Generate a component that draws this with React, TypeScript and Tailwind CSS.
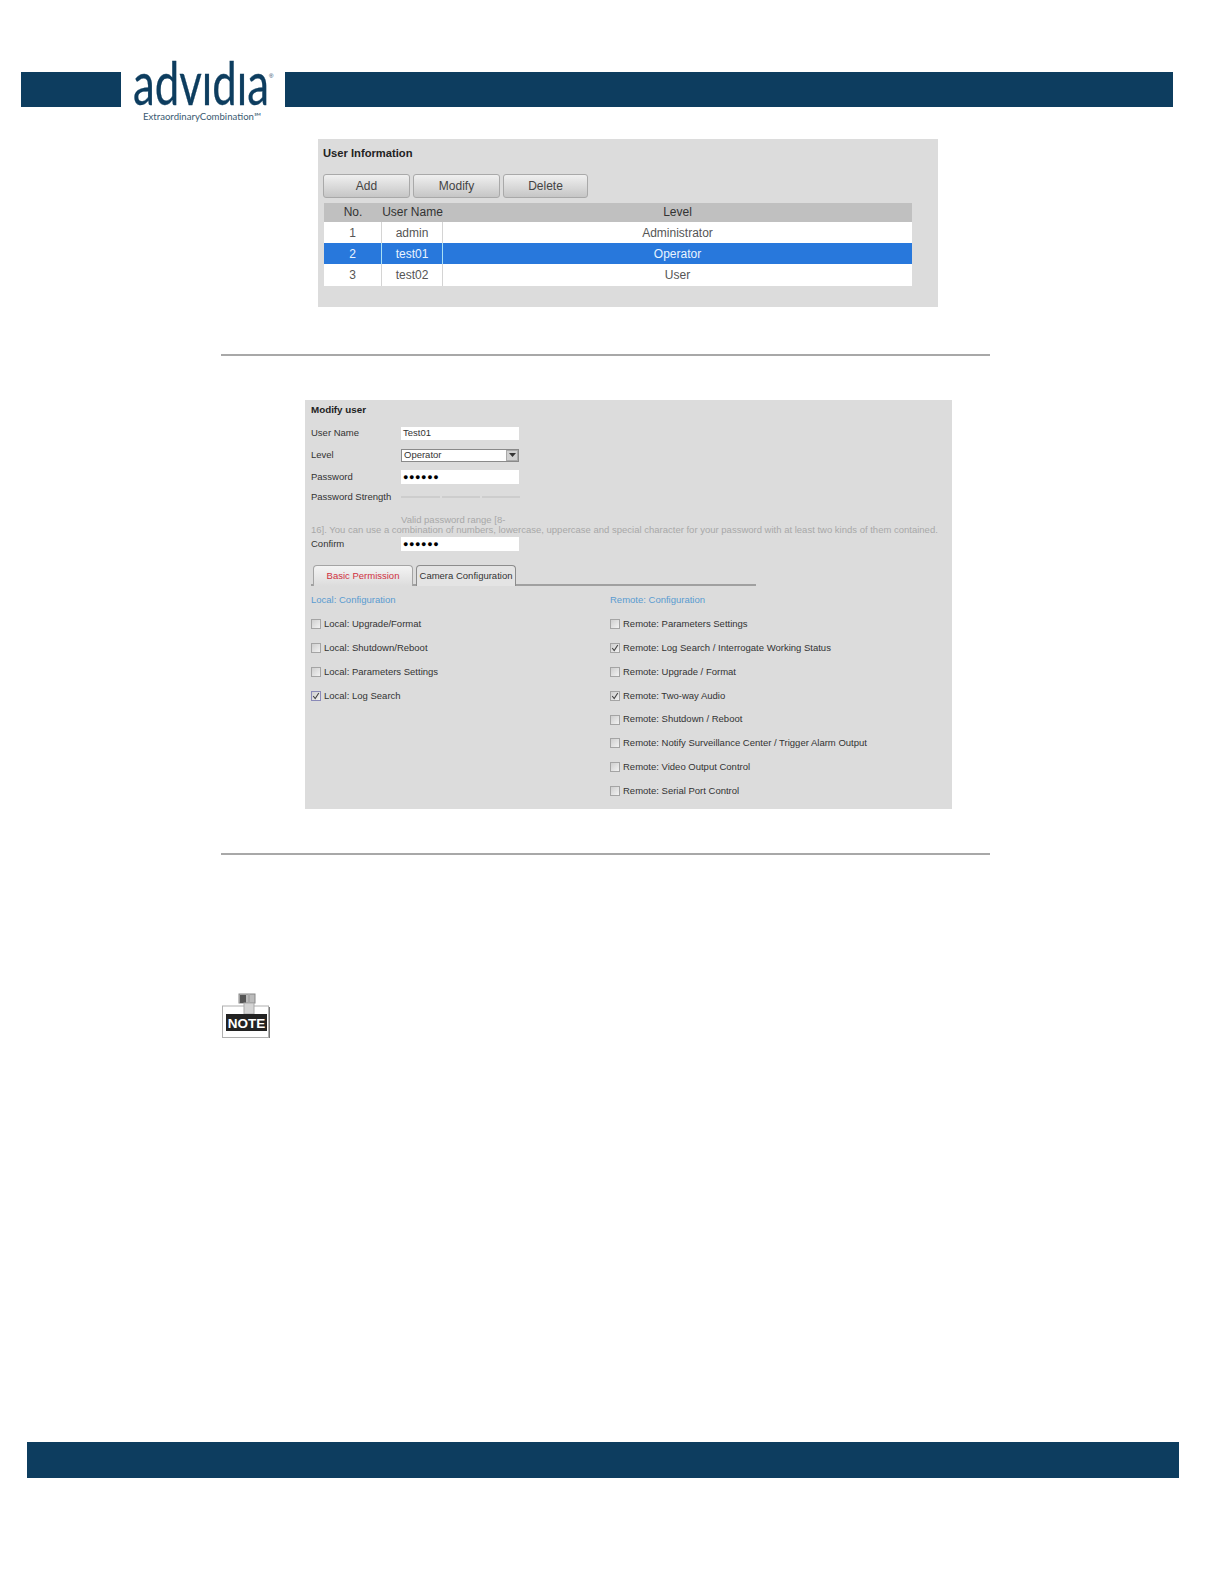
const font = "font-['Liberation_Sans',Arial,sans-serif]";

function Logo() {
  return (
    <svg className="absolute left-[8px] top-[-14px] overflow-visible" width="150" height="70" viewBox="0 0 150 70">
      <text x="4" y="47" fontFamily="Lato, sans-serif" fontWeight="400" fontSize="60" fill="#0d3d5f" stroke="#0d3d5f" strokeWidth="0.3" textLength="136" lengthAdjust="spacingAndGlyphs">advidia</text>
      <rect x="73" y="1" width="10" height="14" fill="#fff" />
      <rect x="109" y="1" width="8" height="14" fill="#fff" />
      <text x="140" y="20" fontFamily="Liberation Sans, sans-serif" fontSize="6" fill="#0d3d5f">®</text>
      <text x="14" y="62" fontFamily="Lato, sans-serif" fontSize="10" fill="#3a5a72" textLength="118" lengthAdjust="spacingAndGlyphs">ExtraordinaryCombination℠</text>
    </svg>
  );
}

function Btn({ label, w }: { label: string; w: string }) {
  return (
    <div className={`${w} h-[24px] flex items-center justify-center rounded-[3px] border border-[#a9a9a9] bg-gradient-to-b from-[#f0f0f0] to-[#c6c6c6] text-[12px] text-[#444]`}>
      {label}
    </div>
  );
}

function Row({ no, name, level, sel, h = 'h-[21px]' }: { no: string; name: string; level: string; sel?: boolean; h?: string }) {
  return (
    <div className={`flex ${h} items-center text-[12px] ${sel ? 'bg-[#2878dc] text-[#e8f4ff]' : 'bg-white text-[#555]'}`}>
      <div className={`w-[58px] h-full flex items-center justify-center border-r ${sel ? 'border-[#a8e0f5]' : 'border-[#d4d4d4]'}`}>{no}</div>
      <div className={`w-[61px] h-full flex items-center justify-center border-r ${sel ? 'border-[#a8e0f5]' : 'border-[#d4d4d4]'}`}>{name}</div>
      <div className="flex-1 text-center">{level}</div>
    </div>
  );
}

function Check({ on, blue }: { on?: boolean; blue?: boolean }) {
  return (
    <div className={`w-[10px] h-[10px] shrink-0 border ${blue ? 'border-[#8a8ab8]' : 'border-[#a4a4a4]'} bg-gradient-to-br from-[#cfcfcf] to-[#f2f2f2] flex items-center justify-center`}>
      {on && (
        <svg width="8" height="8" viewBox="0 0 8 8">
          <path d="M1.2 4 L3.2 6.6 L6.8 1" fill="none" stroke="#444" strokeWidth="1.1" />
        </svg>
      )}
    </div>
  );
}

function Perm({ label, on, blue }: { label: string; on?: boolean; blue?: boolean }) {
  return (
    <div className="h-[23.8px] flex items-center gap-[3px] text-[9.5px] text-[#333]">
      <Check on={on} blue={blue} />
      <span>{label}</span>
    </div>
  );
}

function FieldBox({ children, h = 'h-[13px]' }: { children?: React.ReactNode; h?: string }) {
  return <div className={`w-[118px] ${h} bg-white flex items-center pl-[2px] text-[9.5px] text-[#333]`}>{children}</div>;
}

function Dots() {
  return <span className="text-[9px] font-bold tracking-[0.6px] text-black leading-none">●●●●●●</span>;
}

function FormRow({ label, h, children }: { label: string; h: string; children?: React.ReactNode }) {
  return (
    <div className={`flex items-center ${h} text-[9.5px] text-[#333]`}>
      <div className="w-[90px]">{label}</div>
      {children}
    </div>
  );
}

function NoteIcon() {
  return (
    <svg width="52" height="46" viewBox="0 0 52 46">
      <rect x="2.5" y="13" width="46" height="31.5" fill="#fff" stroke="#b0b0b0" strokeWidth="1" />
      <line x1="49.5" y1="14" x2="49.5" y2="45" stroke="#777" strokeWidth="1" />
      <rect x="19" y="1" width="16" height="9" fill="#bbb" stroke="#888" strokeWidth="1" />
      <rect x="20" y="2" width="6" height="8" fill="#555" />
      <rect x="28" y="1" width="2" height="20" fill="#aaa" />
      <rect x="24" y="10" width="10" height="11" fill="#d4d4d4" stroke="#aaa" strokeWidth="1" />
      <rect x="6" y="21" width="41" height="17" fill="#222" />
      <text x="26.5" y="34.5" textAnchor="middle" fontFamily="Liberation Sans, sans-serif" fontWeight="700" fontSize="13.5" fill="#fff">NOTE</text>
    </svg>
  );
}

export default function App() {
  return (
    <div className={`${font} w-[1224px] h-[1584px] bg-white overflow-hidden`}>
      <div className="pt-[72px] pl-[21px] flex">
        <div className="w-[100px] h-[35px] bg-[#0d3d5f]" />
        <div className="relative w-[164px] h-[35px]"><Logo /></div>
        <div className="w-[888px] h-[35px] bg-[#0d3d5f]" />
      </div>

      <div className="mt-[32px] ml-[318px] w-[620px] h-[168px] bg-[#dcdcdc] pt-[7px] pl-[5px] pr-[26px]">
        <div className="text-[11.2px] font-bold text-[#222] h-[14px] leading-[14px]">User Information</div>
        <div className="mt-[14px] flex gap-[3px]">
          <Btn label="Add" w="w-[87px]" />
          <Btn label="Modify" w="w-[87px]" />
          <Btn label="Delete" w="w-[85px]" />
        </div>
        <div className="ml-[1px] mt-[5px] w-[588px]">
          <div className="flex h-[19px] pb-[2px] items-center bg-[#c0c0c0] text-[12px] text-[#333]">
            <div className="w-[58px] text-center">No.</div>
            <div className="w-[61px] text-center whitespace-nowrap">User Name</div>
            <div className="flex-1 text-center">Level</div>
          </div>
          <Row no="1" name="admin" level="Administrator" />
          <Row no="2" name="test01" level="Operator" sel />
          <Row no="3" name="test02" level="User" h="h-[22px]" />
        </div>
      </div>

      <div className="mt-[47px] ml-[221px] w-[769px] h-[2px] bg-[#a8a8a8]" />

      <div className="mt-[44px] ml-[305px] w-[647px] h-[409px] bg-[#dcdcdc] pl-[6px] pt-[2px]">
        <div className="h-[16px] flex items-center text-[9.8px] font-bold text-[#222]">Modify user</div>
        <div className="mt-[6px]">
          <FormRow label="User Name" h="h-[18px]"><FieldBox>Test01</FieldBox></FormRow>
          <div className="h-[4px]" />
          <FormRow label="Level" h="h-[18px]">
            <div className="w-[118px] h-[13px] bg-white border border-[#8a8a8a] flex items-center justify-between pl-[2px] text-[9.5px] text-[#333]">
              Operator
              <div className="w-[12px] h-[11px] bg-[#d0d0d0] border border-[#aaa] flex items-center justify-center">
                <svg width="7" height="4" viewBox="0 0 7 4"><path d="M0 0 H7 L3.5 4 Z" fill="#333" /></svg>
              </div>
            </div>
          </FormRow>
          <div className="h-[4px]" />
          <FormRow label="Password" h="h-[18px]"><FieldBox h="h-[14px]"><Dots /></FieldBox></FormRow>
          <div className="h-[2px]" />
          <FormRow label="Password Strength" h="h-[18px]">
            <div className="flex gap-[2px]">
              <div className="w-[39px] h-[2px] bg-[#cdcdcd]" />
              <div className="w-[38px] h-[2px] bg-[#cdcdcd]" />
              <div className="w-[38px] h-[2px] bg-[#cdcdcd]" />
            </div>
          </FormRow>
          <div className="mt-[9px] text-[9.5px] leading-[10px] text-[#a8a8a8]">
            <div className="pl-[90px]">Valid password range [8-</div>
            <div className="whitespace-nowrap">16]. You can use a combination of numbers, lowercase, uppercase and special character for your password with at least two kinds of them contained.</div>
          </div>
          <FormRow label="Confirm" h="h-[18px]"><FieldBox h="h-[14px]"><Dots /></FieldBox></FormRow>
        </div>
        <div className="mt-[12px] w-[445px] h-[21px] border-b-[2px] border-[#a0a0a0] flex pl-[2px] gap-[3px] text-[9.5px]">
          <div className="w-[100px] h-[21px] rounded-t-[4px] border border-b-0 border-[#a4a4a4] bg-gradient-to-b from-[#f4f4f4] to-[#dcdcdc] flex items-center justify-center text-[#d03040]">Basic Permission</div>
          <div className="w-[100px] h-[21px] rounded-t-[4px] border border-b-0 border-[#8c8c8c] bg-[#e4e4e4] flex items-center justify-center text-[#333]">Camera Configuration</div>
        </div>
        <div className="flex mt-[7.5px]">
          <div className="w-[299px]">
            <div className="h-[14px] flex items-center text-[9.5px] text-[#5a9bd0]">Local: Configuration</div>
            <div className="mt-[5px]">
              <Perm label="Local: Upgrade/Format" />
              <Perm label="Local: Shutdown/Reboot" />
              <Perm label="Local: Parameters Settings" />
              <Perm label="Local: Log Search" on blue />
            </div>
          </div>
          <div>
            <div className="h-[14px] flex items-center text-[9.5px] text-[#5a9bd0]">Remote: Configuration</div>
            <div className="mt-[5px]">
              <Perm label="Remote: Parameters Settings" />
              <Perm label="Remote: Log Search / Interrogate Working Status" on />
              <Perm label="Remote: Upgrade / Format" />
              <Perm label="Remote: Two-way Audio" on />
              <Perm label="Remote: Shutdown / Reboot" />
              <Perm label="Remote: Notify Surveillance Center / Trigger Alarm Output" />
              <Perm label="Remote: Video Output Control" />
              <Perm label="Remote: Serial Port Control" />
            </div>
          </div>
        </div>
      </div>

      <div className="mt-[44px] ml-[221px] w-[769px] h-[2px] bg-[#a8a8a8]" />

      <div className="mt-[138px] ml-[220px] h-[46px]"><NoteIcon /></div>

      <div className="mt-[403px] ml-[27px] w-[1152px] h-[36px] bg-[#0d3d5f]" />
    </div>
  );
}
